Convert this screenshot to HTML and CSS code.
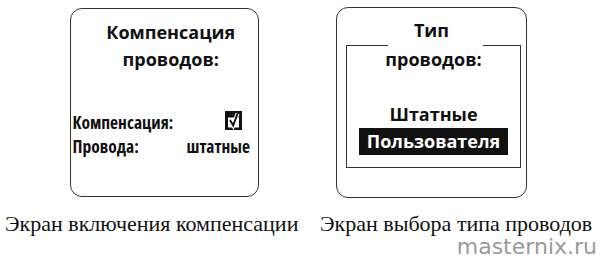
FILE: index.html
```html
<!DOCTYPE html>
<html lang="ru">
<head>
<meta charset="utf-8">
<link rel="stylesheet" href="styles.css">
</head>
<body>
<div class="page">
  <div class="figure fig-left">
    <div class="screen screen-left">
      <div class="title">Компенсация<br>проводов:</div>
      <div class="rows">
        <div class="row">
          <span>Компенсация:</span>
          <svg class="check" width="17" height="19" viewBox="0 0 17 19">
            <rect x="0" y="0" width="17" height="19" fill="#111"/>
            <rect x="3" y="6.5" width="11" height="10" fill="#fff"/>
            <path d="M5 9 L8.2 14.5 L12.6 2.5" fill="none" stroke="#fff" stroke-width="4"/>
            <path d="M5 9 L8.2 14.5 L12.6 2.5" fill="none" stroke="#111" stroke-width="2"/>
          </svg>
        </div>
        <div class="row">
          <span>Провода:</span>
          <span class="val">штатные</span>
        </div>
      </div>
    </div>
    <div class="caption">Экран включения компенсации</div>
  </div>
  <div class="figure fig-right">
    <div class="screen screen-right">
      <div class="title title-top">Тип</div>
      <div class="frame">
        <div class="title">проводов:</div>
        <div class="opt opt-first">Штатные</div>
        <div class="opt selected">Пользователя</div>
      </div>
    </div>
    <div class="caption">Экран выбора типа проводов</div>
    <div class="brand">masternix.ru</div>
  </div>
</div>
</body>
</html>
```

FILE: styles.css
```css
html, body {
  margin: 0;
  padding: 0;
  background: #fff;
}
.page {
  width: 600px;
  height: 260px;
  display: flex;
  color: #111;
}
.figure {
  display: flex;
  flex-direction: column;
}
.fig-left {
  width: 315px;
}
.fig-right {
  width: 285px;
}
.screen {
  box-sizing: border-box;
  border: 1.5px solid #333;
  border-radius: 12px;
  display: flex;
  flex-direction: column;
}
.screen-left {
  width: 189px;
  height: 189px;
  margin: 8px 0 0 70px;
  padding: 0 8px 0 1.5px;
}
.screen-right {
  width: 191px;
  height: 191px;
  margin: 7px 0 0 21px;
  padding: 0 5px 0 9px;
}
.title {
  font-family: "Open Sans", sans-serif;
  font-weight: 700;
  font-size: 18px;
  line-height: 27px;
  text-align: center;
}
.screen-left .title {
  margin: 10px 0 0 19px;
}
.rows {
  margin-top: 37px;
  font-family: "Open Sans", sans-serif;
  font-stretch: 85%;
  font-weight: bold;
  font-size: 17.5px;
  line-height: 24px;
}
.row {
  display: flex;
  justify-content: space-between;
  align-items: flex-start;
}
.check {
  margin-right: 8px;
  margin-top: 1px;
  display: block;
}
.title-top {
  margin: 9px 0 0 -4px;
}
.frame {
  position: relative;
  margin-top: 0.5px;
  height: 123.5px;
  border: 1.5px solid #333;
  border-top: none;
  box-sizing: border-box;
  display: flex;
  flex-direction: column;
  align-items: center;
}
.frame::before, .frame::after {
  content: "";
  position: absolute;
  top: 0;
  height: 1.5px;
  background: #333;
}
.frame::before {
  left: 0;
  width: 41px;
}
.frame::after {
  right: 0;
  width: 37px;
}
.frame .title {
  margin-top: 1.5px;
}
.opt {
  font-family: "Open Sans", sans-serif;
  font-stretch: 100%;
  font-weight: bold;
  font-size: 18px;
  line-height: 24px;
}
.opt-first {
  margin-top: 29px;
}
.selected {
  background: #111;
  color: #fff;
  width: 149px;
  line-height: 27px;
  margin-top: 2px;
  text-align: center;
}
.caption {
  font-family: "Liberation Serif", serif;
  font-size: 22px;
  line-height: 24px;
  white-space: nowrap;
}
.fig-left .caption {
  margin: 15px 0 0 5px;
}
.fig-right .caption {
  margin: 14px 0 0 5px;
}
.brand {
  font-family: "DejaVu Sans", sans-serif;
  font-size: 22px;
  color: #9a9a9a;
  line-height: 22px;
  text-align: right;
  margin-right: 3px;
}
```
